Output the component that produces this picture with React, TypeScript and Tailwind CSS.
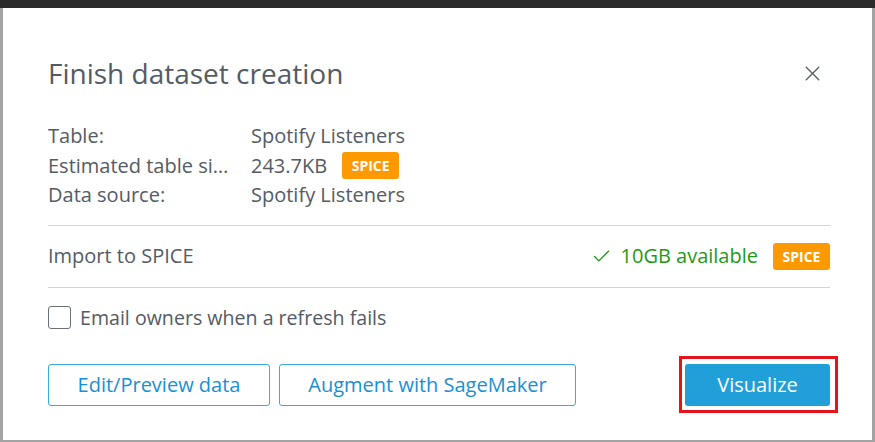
import { Check, X } from "lucide-react";

const font = { fontFamily: '"Open Sans", "Liberation Sans", sans-serif' };

function SpiceBadge() {
  return (
    <span className="inline-flex h-[27px] w-[57px] items-center justify-center rounded-[3px] bg-[#ff9900] text-[14px] font-bold text-white">
      SPICE
    </span>
  );
}

export default function App() {
  const rows = [
    { label: "Table:", value: "Spotify Listeners" },
    { label: "Estimated table si…", value: "243.7KB", badge: true },
    { label: "Data source:", value: "Spotify Listeners" },
  ];

  return (
    <div className="flex h-[442px] w-[875px] flex-col overflow-hidden bg-[#a3a3a3]" style={font}>
      <div className="h-[8px] shrink-0 bg-[#2b2b2b]" />
      <div className="flex flex-1 px-[3px] pb-[2px]">
        {/* dialog */}
        <div className="flex flex-1 flex-col bg-white pl-[45px] pr-[42px] pt-[47px] text-[#545b64]">
          <div className="flex h-[36px] items-center justify-between">
            <h1 className="text-[28px] leading-[36px] font-normal">Finish dataset creation</h1>
            <X className="mr-[5px] h-[25px] w-[25px] text-[#545b64]" strokeWidth={1.3} />
          </div>

          <div className="mt-[30px] flex flex-col text-[20px] leading-[29.5px]">
            {rows.map((r) => (
              <div key={r.label} className="flex items-center">
                <span className="w-[203px] whitespace-nowrap">{r.label}</span>
                <span>{r.value}</span>
                {r.badge && (
                  <span className="ml-[15px] flex">
                    <SpiceBadge />
                  </span>
                )}
              </div>
            ))}
          </div>

          <div className="mt-[15px] h-px bg-[#d5d5d5]" />
          <div className="flex h-[61px] items-center justify-between text-[20px]">
            <span>Import to SPICE</span>
            <div className="flex items-center">
              <Check className="mr-[9px] h-[21px] w-[21px] text-[#1d9a14]" strokeWidth={1.6} />
              <span className="text-[20px] text-[#1d9a14]">10GB available</span>
              <span className="ml-[15px] flex">
                <SpiceBadge />
              </span>
            </div>
          </div>
          <div className="h-px bg-[#d5d5d5]" />

          <label className="mt-[15px] flex items-center text-[19.6px]">
            <span className="h-[23px] w-[23px] rounded-[3px] border-[1.5px] border-[#6b7078] bg-white" />
            <span className="ml-[9px]">Email owners when a refresh fails</span>
          </label>

          <div className="mt-[32px] flex items-center">
            <button className="h-[42px] w-[222px] rounded-[3px] border border-[#3aa9e0] text-[20px] text-[#1890d3]">
              Edit/Preview data
            </button>
            <button className="ml-[9px] h-[42px] w-[297px] rounded-[3px] border border-[#3aa9e0] text-[20px] text-[#1890d3]">
              Augment with SageMaker
            </button>
            <div className="relative ml-auto">
              <button className="h-[42px] w-[145px] rounded-[3px] bg-[#219fd8] text-[20px] font-medium text-white">
                Visualize
              </button>
              {/* annotation box */}
              <div className="pointer-events-none absolute -bottom-[7px] -left-[6px] -right-[8px] -top-[8px] border-[3px] border-[#e3141b]" />
            </div>
          </div>
        </div>
      </div>
    </div>
  );
}
